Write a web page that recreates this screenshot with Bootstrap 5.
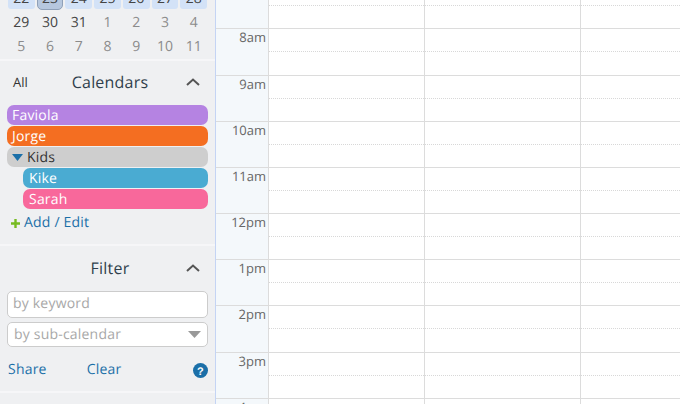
<!DOCTYPE html>
<html lang="en"><head><meta charset="utf-8"><title>Calendar</title>
<link rel="stylesheet" href="https://cdn.jsdelivr.net/npm/bootstrap@5.3.0/dist/css/bootstrap.min.css">
<style>
html,body{height:404px;overflow:hidden;background:#fff}
body{font-family:"Open Sans","Noto Sans",sans-serif;font-size:14px;color:#333;text-rendering:geometricPrecision;letter-spacing:.2px}
.shell{height:404px;overflow:hidden}
.side{width:215px;flex:none;background:#eff0f2;overflow:hidden;height:404px}
.divline{width:1px;flex:none;background:#c4d4f4}
.minical{margin-top:-10px;height:69px}
.mrow{display:grid;grid-template-columns:repeat(7,1fr);padding:0 7px;height:24px;line-height:26px;text-align:center;font-size:14px;letter-spacing:0}
.mrow span{color:#444}
.mrow span.dim{color:#8b8b8b}
.mrow.top{height:19px;line-height:17px;margin-bottom:1px}
.mrow.top span{background:#d3e2f7;border-radius:3px;margin:0 1px;overflow:hidden;height:19px}
.mrow.top span.cur{background:#b6c7de;border:1px solid #8fa0b8;border-radius:5px;height:20px;line-height:15px}
.sect{border-top:2px solid #f6f6f8}
.sect-cal{height:185px}
.sect-filter{height:147px}
.sect-last{height:20px}
.sect-head{display:flex;align-items:center;height:44px;padding:0 15px 2px 13px}
.sect-filter .sect-head{height:45px;padding-bottom:1px}
.sect-title{flex:1;text-align:center;font-size:16px;color:#2f3f4c;padding-right:5px}
.allbtn{font-size:13px;color:#333;width:26px;padding-top:1px;letter-spacing:0}
.cal-list{padding:0 7px;display:flex;flex-direction:column;gap:1px}
.cal-pill{height:20px;line-height:20px;border-radius:7px;padding:1px 0 0 5px;font-size:14px;color:#fff;display:flex;align-items:center}
.nest{margin-left:16px;padding-left:6px}
.c-faviola{background:#b583e2}
.c-jorge{background:#f46e21}
.c-kike{background:#4aabd2}
.c-sarah{background:#f8689b}
.kids{background:#cecece;color:#333}
.addrow{padding:4px 0 0 11px;font-size:14px;color:#1b6fa8;display:flex;align-items:center;gap:4px;line-height:20px}
.fbox{height:27px;margin:0 7px 4px;padding:0 6px 2px 5px;border:1px solid #cccccc;border-radius:5px;background:#fff;color:#a8a8a8;font-size:14px;display:flex;align-items:center;justify-content:space-between}
.fbox.sel{height:25px;margin-bottom:0;padding:0 6px 1px 6px}
.frow{padding:13px 7px 0 8px;display:flex;align-items:center;color:#1b6fa8;font-size:14px;line-height:20px}
.frow .clearlink{margin-left:40px;flex:1}
.main{flex:1;min-width:0;overflow:hidden;height:404px}
.timecol{width:52px;flex:none;background:#f4f8fb}
.daycol{width:156px;flex:none;border-left:1px solid #dcdcdc}
.scroller{margin-top:-17.75px}
.hour{height:46.17px;border-top:1px solid #dcdcdc}
.half{height:23px;border-bottom:1px dotted #d8d8d8}
.tlabel{height:46.17px;border-top:1px solid #dcdcdc;text-align:right;padding-right:2px;font-size:13px;line-height:16px;color:#666;letter-spacing:0}
</style></head>
<body>
<div class="shell d-flex">
  <aside class="side">
    <div class="minical">
      <div class="mrow top"><span>22</span><span class="cur">23</span><span>24</span><span>25</span><span>26</span><span>27</span><span>28</span></div>
      <div class="mrow"><span>29</span><span>30</span><span>31</span><span class="dim">1</span><span class="dim">2</span><span class="dim">3</span><span class="dim">4</span></div>
      <div class="mrow"><span class="dim">5</span><span class="dim">6</span><span class="dim">7</span><span class="dim">8</span><span class="dim">9</span><span class="dim">10</span><span class="dim">11</span></div>
    </div>
    <section class="sect sect-cal">
      <div class="sect-head"><span class="allbtn">All</span><span class="sect-title">Calendars</span>
        <svg width="14" height="8" viewBox="0 0 14 8"><path d="M1 7l6-5.5L13 7" fill="none" stroke="#555" stroke-width="2"/></svg></div>
      <div class="cal-list">
        <div class="cal-pill c-faviola">Faviola</div>
        <div class="cal-pill c-jorge">Jorge</div>
        <div class="cal-pill kids"><svg class="me-1" width="11" height="7" viewBox="0 0 11 7"><path d="M0 0h11L5.5 7z" fill="#1b6fa8"/></svg>Kids</div>
        <div class="cal-pill nest c-kike">Kike</div>
        <div class="cal-pill nest c-sarah">Sarah</div>
      </div>
      <div class="addrow"><svg width="9" height="9" viewBox="0 0 9 9"><path d="M4.5 0v9M0 4.5h9" stroke="#77bb22" stroke-width="2.4"/></svg><span>Add / Edit</span></div>
    </section>
    <section class="sect sect-filter">
      <div class="sect-head"><span class="allbtn"></span><span class="sect-title">Filter</span>
        <svg width="14" height="8" viewBox="0 0 14 8"><path d="M1 7l6-5.5L13 7" fill="none" stroke="#555" stroke-width="2"/></svg></div>
      <div class="fbox">by keyword</div>
      <div class="fbox sel"><span>by sub-calendar</span><svg width="13" height="7" viewBox="0 0 13 7"><path d="M0 0h13L6.5 7z" fill="#999"/></svg></div>
      <div class="frow"><span>Share</span><span class="clearlink">Clear</span>
        <svg width="15" height="15" viewBox="0 0 15 15"><circle cx="7.5" cy="7.5" r="7.5" fill="#1b6fa8"/><text x="7.5" y="11.5" text-anchor="middle" font-family="Liberation Sans" font-weight="700" font-size="11" fill="#fff">?</text></svg></div>
    </section>
    <section class="sect sect-last"></section>
  </aside>
  <div class="divline"></div>
  <main class="main d-flex">
    <div class="timecol"><div class="scroller" id="times"></div></div>
    <div class="daycol"><div class="scroller hours"></div></div>
    <div class="daycol"><div class="scroller hours"></div></div>
    <div class="daycol"><div class="scroller hours"></div></div>
  </main>
</div>
<script>
var labels=["7am","8am","9am","10am","11am","12pm","1pm","2pm","3pm","4pm"];
document.getElementById("times").innerHTML=labels.map(function(l,i){return '<div class="tlabel">'+(i?l:"")+'</div>'}).join("");
document.querySelectorAll(".hours").forEach(function(c){c.innerHTML=labels.map(function(){return '<div class="hour"><div class="half"></div></div>'}).join("")});
</script>
</body></html>
